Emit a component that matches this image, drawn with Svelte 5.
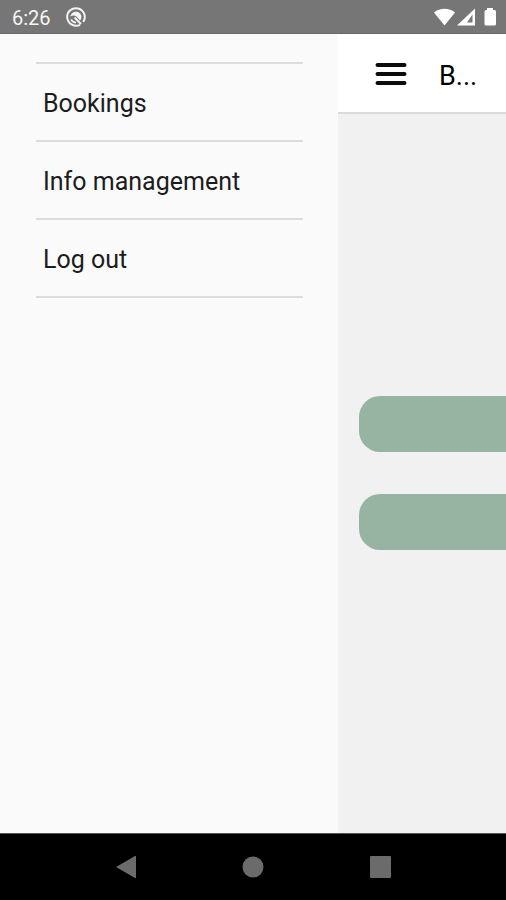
<script>
  const links = ['Bookings', 'Info management', 'Log out'];
</script>

<div class="screen">
  <header class="status">
    <span class="time">6:26</span>
    <svg class="app" width="20" height="20" viewBox="0 0 20 20" fill="none" stroke="#f4f4f4" aria-hidden="true">
      <path d="M14 17.800A8.800 8.800 0 1 1 17.200 15" stroke-width="2" />
      <path d="M4.500 9.500C5 3 15 3 15.500 9.500Q15.500 12 14 13.500L10.500 9.500Q7.500 7.500 4.500 9.500Z" fill="#f4f4f4" stroke="none" />
      <path d="M8.500 10.500L15 17" stroke-width="2" />
      <path d="M5 12.500Q7 15.500 10 15.500" stroke-width="1.600" />
    </svg>
    <svg class="signals" width="62" height="20" viewBox="0 0 62 20" fill="#fff" aria-hidden="true">
      <path d="M0 5.500C6 .5 15 .5 21 5.500L10.500 18.500Z" />
      <path fill-rule="evenodd" d="M23 18.500L41 1.500V18.500ZM38.500 7.500L33 15.500H38.500Z" />
      <path d="M53 1H59V3H60.500Q62 3 62 4.500V17Q62 18.500 60.500 18.500H52Q50.500 18.500 50.500 17V4.500Q50.500 3 52 3H53Z" />
    </svg>
  </header>

  <div class="content">
    <nav class="drawer" aria-label="Main menu">
      <ul>
        {#each links as link}
          <li><a href="#menu">{link}</a></li>
        {/each}
      </ul>
    </nav>

    <main>
      <div class="toolbar">
        <button class="menu" aria-label="Toggle menu">
          <svg width="32" height="24" viewBox="0 0 32 24" stroke="#0c0c0c" stroke-width="4" stroke-linecap="round" aria-hidden="true">
            <path d="M2.500 3H29.500M2.500 12H29.500M2.500 21H29.500" />
          </svg>
        </button>
        <h1>B...</h1>
      </div>
      <div class="actions">
        <button class="action" aria-label="First action"></button>
        <button class="action" aria-label="Second action"></button>
      </div>
    </main>
  </div>

  <footer class="system">
    <button aria-label="Back">
      <svg width="22" height="24" viewBox="0 0 22 24"><path d="M0 12L19 1Q20 .5 20 1.500V22.500Q20 23.500 19 23Z" /></svg>
    </button>
    <button aria-label="Home">
      <svg width="22" height="22" viewBox="0 0 22 22"><circle cx="11" cy="11" r="10.500" /></svg>
    </button>
    <button aria-label="Recent apps">
      <svg width="22" height="22" viewBox="0 0 22 22"><rect x="1" width="21" height="22" rx="1" /></svg>
    </button>
  </footer>
</div>

<style>
  :global(body) {
    margin: 0;
  }

  .screen {
    display: flex;
    flex-direction: column;
    height: 100vh;
    overflow: hidden;
    font-family: Roboto, "Liberation Sans", sans-serif;
    color: #111;
  }

  button {
    display: flex;
    align-items: center;
    justify-content: center;
    padding: 0;
    border: 0;
    background: none;
  }

  .status {
    display: flex;
    align-items: center;
    box-sizing: border-box;
    flex: 0 0 34px;
    padding: 0 10px 0 12px;
    border-bottom: 1px solid #686868;
    background: #767676;
    color: #f6f6f6;
  }

  .time {
    padding-top: 2px;
    font-size: 20px;
    line-height: 24px;
  }

  .app {
    margin-left: 15px;
  }

  .signals {
    margin-left: auto;
  }

  .content {
    display: flex;
    flex: 1;
    min-height: 0;
  }

  .drawer {
    box-sizing: border-box;
    flex: 0 0 338px;
    padding: 28px 35px 0 36px;
    background: #fafafa;
  }

  ul {
    margin: 0;
    padding: 0;
    list-style: none;
    border-top: 2px solid #dcdcdc;
  }

  li {
    border-bottom: 2px solid #dcdcdc;
  }

  a {
    display: block;
    padding: 24px 7px 20px;
    color: #1c1c1c;
    font-size: 25px;
    line-height: 32px;
    text-decoration: none;
  }

  main {
    display: flex;
    flex-direction: column;
    flex: 1;
    min-width: 0;
    background: #f1f1f1;
  }

  .toolbar {
    display: flex;
    align-items: center;
    box-sizing: border-box;
    flex: 0 0 80px;
    padding: 2px 28px 0 37px;
    border-bottom: 2px solid #dadada;
    background: #fff;
  }

  .menu {
    flex: none;
  }

  h1 {
    margin: 0 0 0 32px;
    padding-top: 4px;
    color: #000;
    font-size: 27px;
    font-weight: 400;
    line-height: 32px;
    white-space: nowrap;
  }

  .actions {
    display: flex;
    flex: 1;
    flex-direction: column;
    justify-content: center;
    gap: 42px;
    padding: 0 0 2px 21px;
  }

  .action {
    height: 56px;
    border-radius: 21px 0 0 21px;
    background: #97b4a2;
  }

  .system {
    display: grid;
    grid-template-columns: repeat(3, 1fr);
    box-sizing: border-box;
    flex: 0 0 67px;
    padding: 0 12.5%;
    border-top: 1px solid #555;
    background: #000;
    fill: #6b6b6b;
  }
</style>
